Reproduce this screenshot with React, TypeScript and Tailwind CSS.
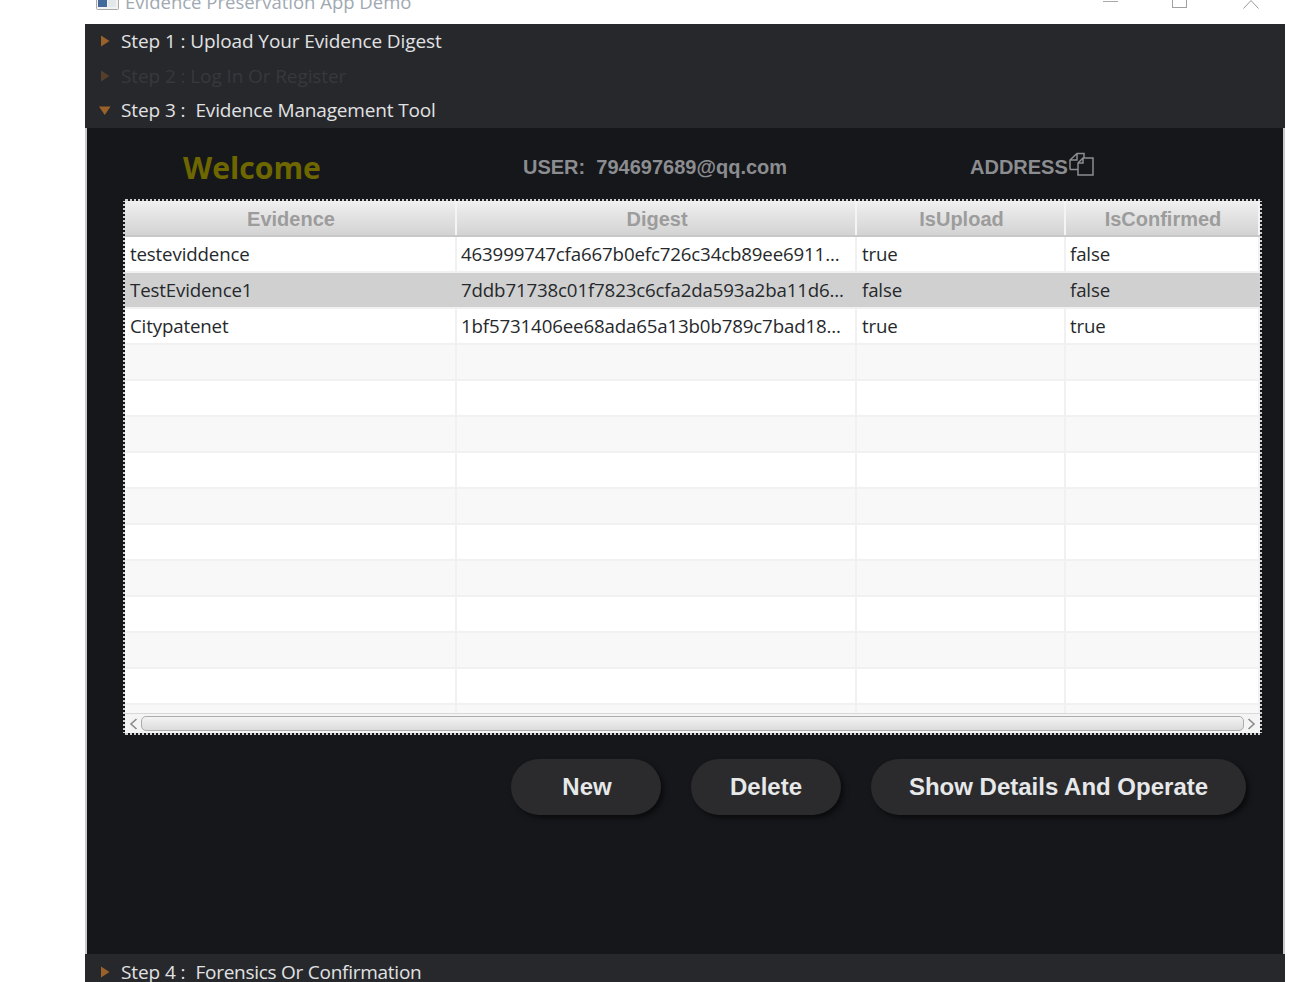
const cols = ["w-[332px]", "w-[400px]", "w-[209px]", "w-[194px]"];
const cellPad = ["pl-[5px]", "pl-[4px]", "pl-[5px]", "pl-[4px]"];
const headers = ["Evidence", "Digest", "IsUpload", "IsConfirmed"];
const empty = ["", "", "", ""];
const rows: string[][] = [
  ["testeviddence", "463999747cfa667b0efc726c34cb89ee6911...", "true", "false"],
  ["TestEvidence1", "7ddb71738c01f7823c6cfa2da593a2ba11d6...", "false", "false"],
  ["Citypatenet", "1bf5731406ee68ada65a13b0b789c7bad18...", "true", "true"],
  empty, empty, empty, empty, empty, empty, empty, empty, empty, empty, empty,
];

function Tri({ open, dim }: { open?: boolean; dim?: boolean }) {
  return (
    <svg width="12" height="12" viewBox="0 0 12 12" className={dim ? "opacity-40" : ""}>
      {open ? <path d="M0 2.5 H11.5 L5.75 11 Z" fill="#9a6229" /> : <path d="M2 0.5 L10.5 6 L2 11.5 Z" fill="#9a6229" />}
    </svg>
  );
}

function Step({ label, rest, restCls, open, dim, cls }: { label: string; rest?: string; restCls?: string; open?: boolean; dim?: boolean; cls: string }) {
  return (
    <div className={`flex items-center gap-[10px] pl-[14px] text-[19px] leading-[26px] ${cls} ${dim ? "text-[#37383b]" : "text-[#e1e2e3]"} font-['Open_Sans',sans-serif]`}>
      <Tri open={open} dim={dim} />
      <span className="whitespace-pre tracking-[-0.1px]">{label}</span>
      {rest ? <span className={`whitespace-pre ${restCls}`}>{rest}</span> : null}
    </div>
  );
}

function Btn({ label, cls }: { label: string; cls: string }) {
  return (
    <button className={`h-[56px] rounded-[28px] bg-[#2b2b2d] text-[#e6e8ea] text-[24px] font-bold font-['Liberation_Sans',sans-serif] shadow-[3px_3px_5px_rgba(0,0,0,0.55)] ${cls}`}>
      {label}
    </button>
  );
}

export default function App() {
  return (
    <div className="h-[982px] overflow-hidden bg-white pl-[85px] pr-[7px]">
      <div className="flex h-full w-[1200px] flex-col">
        <div className="relative h-[24px] shrink-0 overflow-hidden bg-white">
          <svg className="absolute left-[11px] top-[-10px]" width="23" height="20" viewBox="0 0 23 20">
            <rect x="0.5" y="0.5" width="22" height="19" rx="1" fill="#f2f2f2" stroke="#a9a9a9" />
            <rect x="2" y="3" width="9" height="14" fill="#44699c" />
            <rect x="12" y="3" width="8" height="14" fill="#e4e7ea" />
          </svg>
          <span className="absolute left-[40px] top-[-11px] text-[18.5px] leading-[26px] text-[#9fa9b2] font-['Open_Sans',sans-serif]">Evidence Preservation App Demo</span>
          <svg className="absolute left-[1018px] top-0" width="16" height="3" viewBox="0 0 16 3"><path d="M0 1.5 H15" stroke="#a8a8a8" /></svg>
          <div className="absolute left-[1087px] top-[-11px] h-[19px] w-[15px] border border-[#a0a0a0]" />
          <svg className="absolute left-[1158px] top-0" width="16" height="9" viewBox="0 0 16 9"><path d="M0.5 8.5 L8 0.5 L15.5 8.5" stroke="#999" fill="none" /></svg>
        </div>

        <div className="flex h-[104px] shrink-0 flex-col bg-[#27282c] pt-[4px]">
          <Step label="Step 1 : Upload Your Evidence Digest" cls="mb-[9px]" />
          <Step label="Step 2 : Log In Or Register" dim cls="mb-[8px]" />
          <Step label="Step 3 :" rest="Evidence Management Tool" restCls="tracking-[-0.16px]" open cls="" />
        </div>

        <div className="flex h-[826px] shrink-0 flex-col border-x-2 border-x-[#c9c9c9] bg-[#16171b] pl-[36px]">
          <div className="relative h-[71px] shrink-0 font-['Liberation_Sans',sans-serif] font-bold">
            <span className="absolute left-[60px] top-[20px] text-[30.2px] leading-[40px] text-[#6e6700] font-['Open_Sans',sans-serif]">Welcome</span>
            <span className="absolute left-[400px] top-[27px] text-[20px] leading-[25px] whitespace-pre text-[#8b8d90]">USER:  794697689@qq.com</span>
            <div className="absolute left-[847px] top-[24px] flex items-start">
              <span className="mt-[3px] text-[20px] leading-[25px] text-[#8b8d90]">ADDRESS</span>
              <svg width="26" height="24" viewBox="0 0 26 24" fill="none" stroke="#8b8d90" strokeWidth="1.5">
                <path d="M2 17.5 V8 L9 1.5 H16 V6 M2 17.5 H10 M9 1.5 V8 H2" />
                <path d="M10 23 V11 L15 6 H25 V23 Z M15 6 V11 H10" />
              </svg>
            </div>
          </div>

          <div className="flex h-[536px] w-[1139px] shrink-0 flex-col border-2 border-dotted border-[#16171b] bg-[#cfcfcf]">
            <div className="flex h-[36px] shrink-0 border-b-2 border-b-[#c8c8c8] bg-gradient-to-b from-[#f0f0f0] to-[#d3d3d3] font-['Liberation_Sans',sans-serif] text-[20px] font-bold text-[#9c9c9c]">
              {headers.map((h, i) => (
                <div key={h} className={`${cols[i]} flex shrink-0 items-center justify-center border-r-2 border-r-[#f4f4f4] pl-[2px] pt-[1px]`}>{h}</div>
              ))}
            </div>
            <div className="h-[476px] shrink-0 overflow-hidden font-['Open_Sans',sans-serif] text-[18.7px] text-[#26292c]">
              {rows.map((r, i) => (
                <div key={i} className={`flex h-[36px] border-b-2 border-b-[#f1f1f1] ${i === 1 ? "bg-[#d0d0d0]" : i % 2 === 0 ? "bg-white" : "bg-[#f8f8f8]"}`}>
                  {r.map((c, j) => (
                    <div key={j} className={`${cols[j]} ${cellPad[j]} flex shrink-0 items-center whitespace-nowrap tracking-[-0.15px] ${i === 1 ? "" : "border-r-2 border-r-[#f1f1f1]"}`}>{c}</div>
                  ))}
                </div>
              ))}
            </div>
            <div className="flex h-[20px] shrink-0 items-center border-t border-t-[#d8d8d8] bg-[#f4f4f4] px-[2px]">
              <svg width="14" height="14" viewBox="0 0 14 14" fill="none" stroke="#8a8a8a" strokeWidth="1.6"><path d="M9.5 2 L4 7 L9.5 12" /></svg>
              <div className="h-[15px] flex-1 rounded-[5px] border border-[#ababab] bg-gradient-to-b from-[#f3f3f3] to-[#dcdcdc]" />
              <svg width="14" height="14" viewBox="0 0 14 14" fill="none" stroke="#8a8a8a" strokeWidth="1.6"><path d="M4.5 2 L10 7 L4.5 12" /></svg>
            </div>
          </div>

          <div className="mt-[24px] flex gap-[30px] pl-[388px]">
            <Btn label="New" cls="w-[150px] pl-[2px]" />
            <Btn label="Delete" cls="w-[150px]" />
            <Btn label="Show Details And Operate" cls="w-[375px]" />
          </div>
        </div>

        <div className="h-[28px] shrink-0 bg-[#27282c] pt-[5px]">
          <Step label="Step 4 :" rest="Forensics Or Confirmation" restCls="tracking-[-0.26px]" cls="" />
        </div>
      </div>
    </div>
  );
}
